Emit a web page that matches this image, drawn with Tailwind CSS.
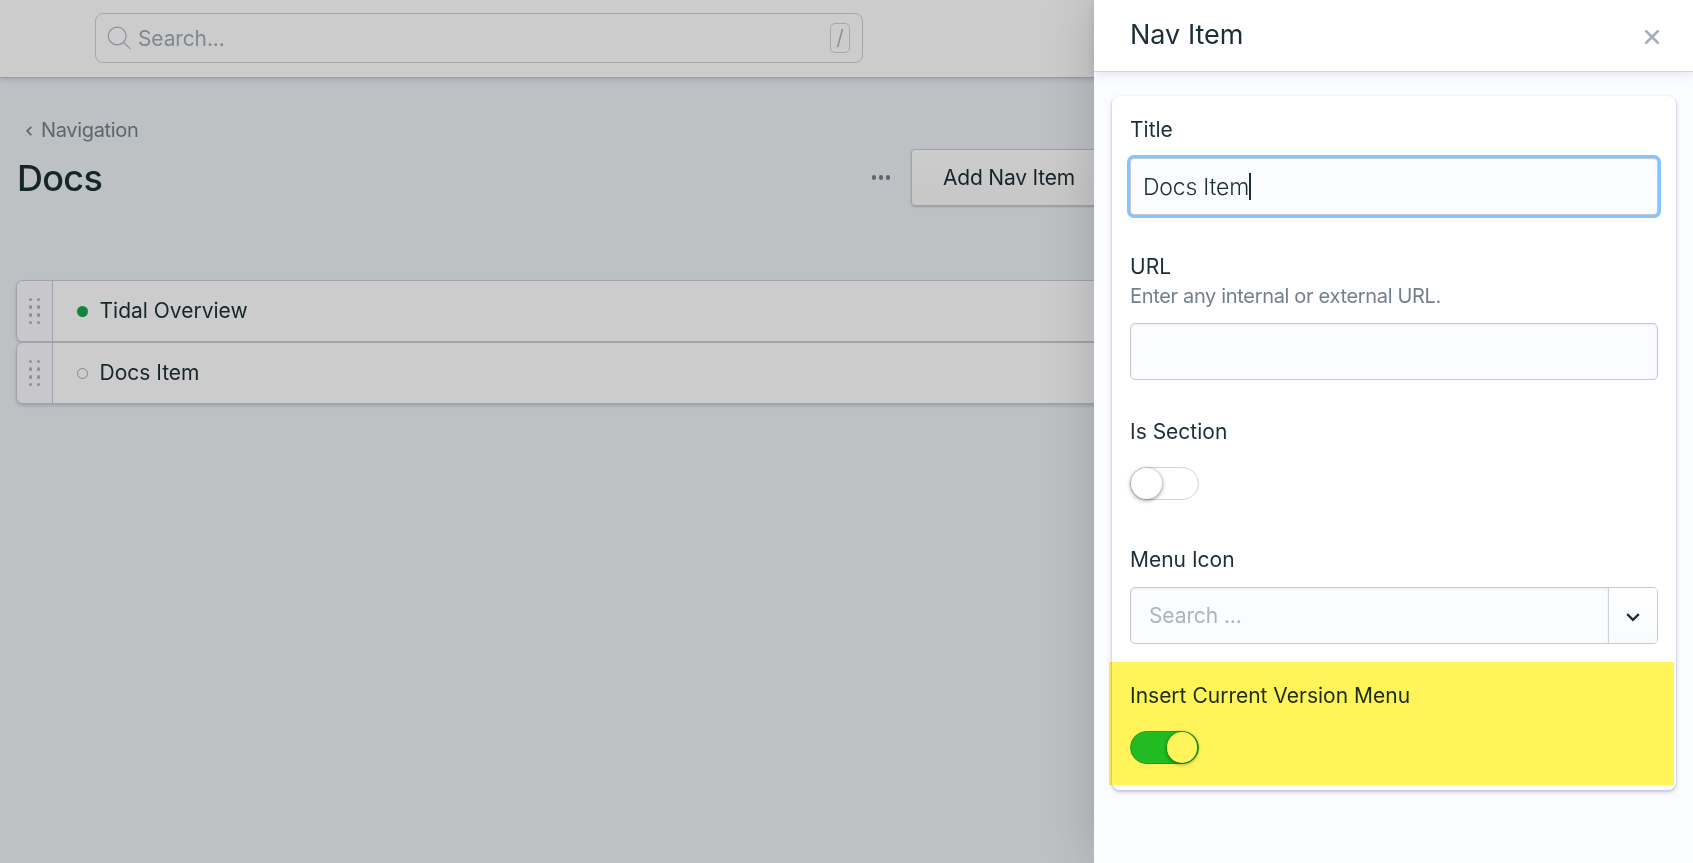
<!DOCTYPE html>
<html lang="en">
<head>
<meta charset="utf-8">
<title>Nav Item</title>
<script src="https://cdn.jsdelivr.net/npm/@tailwindcss/browser@4"></script>
</head>
<body class="relative h-[863px] w-[1693px] overflow-hidden bg-[#edf2f6] font-[Inter,sans-serif] text-[21px] leading-7 text-[#1c2e36]">

<header class="flex h-[77px] items-start bg-white pl-[95px] pt-[13px] shadow-[0_1px_0_#c3c6d1,0_2px_6px_#c0c4d8]">
  <div class="flex h-[50px] w-[768px] items-center rounded-lg border border-[#cdd1d9] pl-[11px] pr-[12px]">
    <svg class="h-6 w-6 shrink-0" viewBox="0 0 24 24" fill="none" stroke="#afb8c3" stroke-width="1.2" stroke-linecap="round"><circle cx="10.2" cy="10" r="8.9"/><path d="M16.5 16.3 23 22.6"/></svg>
    <span class="ml-[7px] mt-[2px] tracking-[-0.13px] text-[#a0abb6]">Search...</span>
    <span class="ml-auto flex h-[30px] w-5 items-center justify-center rounded-[5px] border border-[#d0d4da] text-[#afb8c3]">/</span>
  </div>
</header>

<main class="pl-[17px]">
  <div class="flex h-7 items-center pl-[9px] mt-[39px] text-[20px] text-[#737f8c]">
    <svg class="mt-px h-[10px] w-[6px]" viewBox="0 0 6 10" fill="none" stroke="currentColor" stroke-width="1.7"><path d="M5.3.8 1.2 5l4.1 4.2"/></svg>
    <span class="ml-[9px] tracking-[-0.33px]">Navigation</span>
  </div>
  <div class="flex h-[57px] items-center mt-[5px]">
    <h1 class="text-[36px] leading-[44px] font-medium tracking-[-0.7px]">Docs</h1>
    <div class="ml-auto mr-[21px] flex gap-[2.4px]">
      <i class="size-[4.5px] rounded-full bg-[#737f8c]"></i><i class="size-[4.5px] rounded-full bg-[#737f8c]"></i><i class="size-[4.5px] rounded-full bg-[#737f8c]"></i>
    </div>
    <button class="h-[57px] w-[782px] shrink-0 rounded border border-[#c4ccd6] bg-linear-to-b from-white to-[#fafafa] pl-[31px] text-left tracking-[-0.2px] shadow-[0_1px_2px_#b9bfca]">Add Nav Item</button>
  </div>

  <div class="mt-[75px] flex flex-col gap-[2px]">
    <div class="flex h-[60px] overflow-hidden rounded-md bg-white shadow-[0_0_0_1px_#cacbd8,0_2px_4px_#b6b9cc]">
      <div class="grid w-[36px] grid-cols-[3.5px_3.5px] content-center justify-center gap-x-[4.5px] gap-y-[4.2px] border-r border-[#cacbd8] bg-[#fafbff]">
        <i class="size-[3.5px] rounded-full bg-[#b5b5b8]"></i><i class="size-[3.5px] rounded-full bg-[#b5b5b8]"></i><i class="size-[3.5px] rounded-full bg-[#b5b5b8]"></i><i class="size-[3.5px] rounded-full bg-[#b5b5b8]"></i><i class="size-[3.5px] rounded-full bg-[#b5b5b8]"></i><i class="size-[3.5px] rounded-full bg-[#b5b5b8]"></i><i class="size-[3.5px] rounded-full bg-[#b5b5b8]"></i><i class="size-[3.5px] rounded-full bg-[#b5b5b8]"></i>
      </div>
      <div class="flex items-center pl-6"><i class="size-[11px] rounded-full bg-[#1aa64c]"></i><span class="ml-[11.5px] -mt-px">Tidal Overview</span></div>
    </div>
    <div class="flex h-[60px] overflow-hidden rounded-md bg-white shadow-[0_0_0_1px_#cacbd8,0_2px_4px_#b6b9cc]">
      <div class="grid w-[36px] grid-cols-[3.5px_3.5px] content-center justify-center gap-x-[4.5px] gap-y-[4.2px] border-r border-[#cacbd8] bg-[#fafbff]">
        <i class="size-[3.5px] rounded-full bg-[#b5b5b8]"></i><i class="size-[3.5px] rounded-full bg-[#b5b5b8]"></i><i class="size-[3.5px] rounded-full bg-[#b5b5b8]"></i><i class="size-[3.5px] rounded-full bg-[#b5b5b8]"></i><i class="size-[3.5px] rounded-full bg-[#b5b5b8]"></i><i class="size-[3.5px] rounded-full bg-[#b5b5b8]"></i><i class="size-[3.5px] rounded-full bg-[#b5b5b8]"></i><i class="size-[3.5px] rounded-full bg-[#b5b5b8]"></i>
      </div>
      <div class="flex items-center pl-6"><i class="size-[11px] rounded-full border border-[#a0abb6]"></i><span class="ml-[11.5px] -mt-px">Docs Item</span></div>
    </div>
  </div>
</main>

<div class="absolute inset-0 bg-black/20"></div>

<aside class="absolute inset-y-0 right-0 flex w-[599px] flex-col bg-[#fbfcff] shadow-[0_0_50px_rgba(0,0,0,0.17)]">
  <div class="flex h-[72px] shrink-0 items-start justify-between border-b border-[#d2d6d8] bg-white pl-[36px] pr-[33px] shadow-[0_2px_10px_rgba(0,0,0,0.1)]">
    <h2 class="mt-[17px] text-[27px] leading-9">Nav Item</h2>
    <svg class="mt-[29px] h-4 w-4" viewBox="0 0 16 16" fill="none" stroke="#a5b1bf" stroke-width="2.7" stroke-linecap="round"><path d="M2.2 2.2l11.6 11.6M13.8 2.2 2.2 13.8"/></svg>
  </div>

  <section class="relative ml-[18px] mt-6 h-[694px] w-[564px] rounded-lg bg-white px-[18px] shadow-[0_1px_0_1px_rgba(200,202,222,0.45),0_2px_4px_#c4c7da]">
    <label class="block pt-[20px]">Title</label>
    <div class="mt-[14px] flex h-[57px] items-center rounded border border-[#c4cad1] bg-[#fbfcff] pl-[12px] text-[23px] font-light tracking-[-0.2px] ring-3 ring-[#84c4ff]">Docs Item<i class="h-[27px] w-[2px] bg-[#1c2e36]"></i></div>

    <label class="mt-[38px] block">URL</label>
    <p class="mt-px text-[20px] text-[#737f8c] tracking-[-0.33px]">Enter any internal or external URL.</p>
    <div class="mt-[13px] h-[57px] rounded-[5px] border border-[#c4cad1] bg-[#fbfcff] shadow-[inset_0_1px_3px_rgba(0,0,0,0.07)]"></div>

    <label class="mt-[38px] block">Is Section</label>
    <div class="mt-[21px] h-[33px] w-[69px] rounded-full border border-[#d3d4d8] bg-white"><i class="block size-[30.5px] rounded-full bg-white shadow-[0_1px_4px_rgba(0,0,0,0.5)]"></i></div>

    <label class="mt-[46px] block">Menu Icon</label>
    <div class="mt-[13px] flex h-[57px] overflow-hidden rounded-[5px] border border-[#c4cad1] bg-[#fbfcff]">
      <div class="flex flex-1 items-center pl-[18px] text-[#abb5c0] shadow-[inset_0_1px_3px_rgba(0,0,0,0.07)] tracking-[-0.1px]">Search ...</div>
      <div class="flex w-[49px] items-center justify-center border-l border-[#cdd1d8] bg-linear-to-b from-white to-[#f8fbfd]"><svg class="mt-[4px] h-[9px] w-[14px]" viewBox="0 0 14 9" fill="none" stroke="#1c2e36" stroke-width="2.4"><path d="M1.2 1.2 7 6.8l5.8-5.6"/></svg></div>
    </div>

    <label class="mt-[38px] block">Insert Current Version Menu</label>
    <div class="mt-[21px] flex h-[33px] w-[69px] justify-end rounded-full border border-[#1da43c] bg-[#22c560] pr-px"><i class="block size-[30.5px] rounded-full bg-white shadow-[0_1px_4px_rgba(0,0,0,0.5)]"></i></div>

    <div class="absolute -left-[3px] top-[566px] h-[123px] w-[565px] bg-[#fff459] mix-blend-multiply"></div>
  </section>
</aside>
</body>
</html>
